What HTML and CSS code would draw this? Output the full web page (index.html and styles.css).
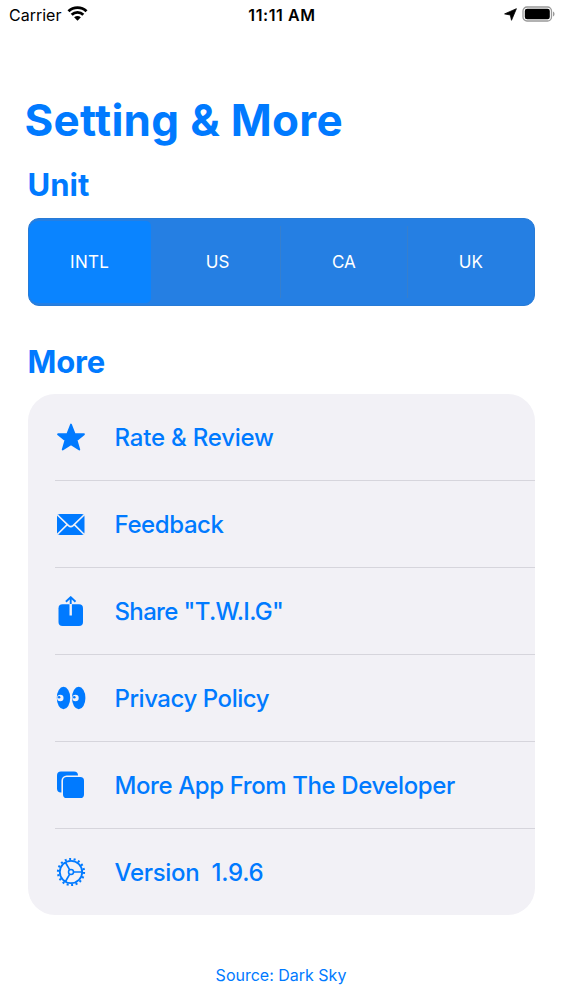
FILE: index.html
```html
<!DOCTYPE html>
<html lang="en">
  <head>
    <meta charset="UTF-8" />
    <meta name="viewport" content="width=device-width, initial-scale=1.0" />
    <title>Setting &amp; More</title>
    <link rel="stylesheet" href="styles.css">
  </head>
  <body>
    <header class="status-bar">
      <div class="status-left">
        <span class="carrier">Carrier</span>
        <svg class="wifi" viewBox="0 0 20 15">
          <path d="M1 5.2a13 13 0 0 1 18 0M4.2 8.7a8.4 8.4 0 0 1 11.6 0" fill="none" stroke="#000" stroke-width="2.9" />
          <path d="M6.6 11.3a5.3 5.3 0 0 1 6.8 0L10 14.8z" />
        </svg>
      </div>
      <span class="time">11:11 AM</span>
      <div class="status-right">
        <svg class="location" viewBox="0 0 13 13"><path d="M12.4.7 7.5 12.3 6.3 7 .6 5.9z" stroke="#000" stroke-width=".8" stroke-linejoin="round" /></svg>
        <svg class="battery" viewBox="0 0 33 16">
          <rect x="1" y="1" width="28.5" height="14" rx="4" fill="none" stroke="#999" stroke-width="1.3" />
          <rect x="2.8" y="2.8" width="25" height="10.4" rx="2.3" />
          <path d="M31 5.5c2 .8 2 4.2 0 5z" fill="#999" />
        </svg>
      </div>
    </header>

    <main>
      <h1>Setting &amp; More</h1>

      <h2 class="unit-title">Unit</h2>
      <div class="segments">
        <button class="segment active">INTL</button>
        <button class="segment">US</button>
        <button class="segment">CA</button>
        <button class="segment">UK</button>
      </div>

      <h2 class="more-title">More</h2>
      <ul class="menu">
        <li>
          <svg class="icon" viewBox="0 0 30 30"><path d="M15 2.5 18.6 11.9 28 12.2 20.6 18.3 23.3 27.6 15 22.2 6.7 27.6 9.4 18.3 2 12.2 11.4 11.9z" stroke="#007aff" stroke-width="1.8" stroke-linejoin="round" /></svg>
          <span class="rate">Rate &amp; Review</span>
        </li>
        <li>
          <svg class="icon" viewBox="0 0 30 30">
            <rect x="1" y="5" width="27.5" height="21" rx="3" />
            <path class="cut" d="M1.5 6 12.5 16.6q2.3 2 4.6 0L28 6M1.5 25.3l9.7-9.7M28 25.3l-9.7-9.7" />
          </svg>
          <span class="feedback">Feedback</span>
        </li>
        <li>
          <svg class="icon" viewBox="0 0 30 30">
            <rect x="2.5" y="8.2" width="24.5" height="21.8" rx="4" />
            <path class="cut slot" d="M14.7 8v11.5" />
            <path d="M14.7 8V1.2M9.9 5.8l4.8-4.7 4.8 4.7" fill="none" stroke="#007aff" stroke-width="1.9" stroke-linejoin="round" />
          </svg>
          <span class="share">Share "T.W.I.G"</span>
        </li>
        <li>
          <svg class="icon" viewBox="0 0 30 30">
            <ellipse cx="7.5" cy="15" rx="6.7" ry="11.2" />
            <ellipse cx="22.7" cy="15" rx="6.7" ry="11.2" />
            <circle class="eye" cx="4.3" cy="15" r="3.2" />
            <circle class="eye" cx="19.5" cy="15" r="3.2" />
            <circle cx="3.1" cy="14.2" r="1.3" />
            <circle cx="18.3" cy="14.2" r="1.3" />
          </svg>
          <span class="privacy">Privacy Policy</span>
        </li>
        <li>
          <svg class="icon" viewBox="0 0 30 30">
            <rect x="1" y="1.5" width="21" height="21" rx="4" />
            <rect class="front" x="6.2" y="6.3" width="22.6" height="22.6" rx="4.5" />
          </svg>
          <span class="apps">More App From The Developer</span>
        </li>
        <li>
          <svg class="icon" viewBox="0 0 30 30">
            <g fill="none" stroke="#007aff">
              <circle cx="15" cy="15" r="13" stroke-width="2.2" stroke-dasharray="2 2.538" />
              <circle cx="15" cy="15" r="11.2" stroke-width="1.8" />
              <circle cx="15" cy="15" r="2.5" stroke-width="1.5" />
              <path d="M17.5 15H26M13.7 12.8 9.5 5.5M13.7 17.2 9.5 24.5" stroke-width="1.7" />
            </g>
          </svg>
          <span class="version">Version&nbsp; 1.9.6</span>
        </li>
      </ul>
    </main>

    <footer>Source: Dark Sky</footer>
  </body>
</html>
```
FILE: styles.css
```css
* {
  box-sizing: border-box;
}

body {
  font-family: Inter, "Liberation Sans", sans-serif;
  background-color: white;
  color: #007aff;
  margin: 0;
  height: 1000px;
  overflow: hidden;
}

.status-bar {
  display: grid;
  grid-template-columns: 1fr auto 1fr;
  align-items: center;
  height: 29px;
  padding: 0 8px 0 9px;
  color: black;
  font-size: 16px;
}

.status-left,
.status-right {
  display: flex;
  align-items: center;
}

.status-left {
  gap: 6px;
}

.status-right {
  justify-content: flex-end;
  gap: 5px;
}

.wifi {
  width: 21px;
  height: 15px;
  margin-top: -2px;
}

.time {
  font-weight: 600;
  letter-spacing: 0.6px;
}

.location {
  width: 13px;
  height: 13px;
}

.battery {
  width: 33px;
  height: 16px;
  margin-top: -2px;
}

main {
  padding: 66px 28px 0 27.5px;
}

h1,
h2 {
  margin: 0;
  font-weight: 700;
  white-space: nowrap;
}

h1 {
  margin-left: -3px;
  font-size: 44px;
  line-height: 50px;
  letter-spacing: 0.3px;
}

h2 {
  font-size: 31px;
  line-height: 40px;
}

.unit-title {
  margin-top: 20px;
}

.segments {
  display: grid;
  grid-template-columns: repeat(4, 1fr);
  height: 88px;
  margin-top: 13px;
  border: 1px solid #277bd7;
  border-radius: 11px;
  background-color: #257fe3;
  overflow: hidden;
}

.segment {
  margin: 7px 0;
  padding: 0;
  border: none;
  border-right: 1px solid #367fce;
  background: none;
  color: white;
  font-family: inherit;
  font-size: 17px;
}

.segment:last-child {
  border-right: none;
}

.segment.active {
  margin: 2px 4px 2px 0;
  border-right: none;
  border-radius: 9px 5px 5px 9px;
  background-color: #0a84ff;
  letter-spacing: 0.3px;
}

.more-title {
  margin-top: 36px;
  letter-spacing: -0.2px;
}

.menu {
  list-style: none;
  margin: 12px 0 0;
  padding: 0;
  border-radius: 27px;
  background-color: #f2f1f6;
}

.menu li {
  display: flex;
  align-items: center;
  gap: 29px;
  height: 87px;
  margin-left: 27px;
  padding-left: 1px;
  border-bottom: 1px solid #d6d5dc;
  font-size: 24px;
  font-weight: 450;
  white-space: nowrap;
}

.menu li:last-child {
  height: 86px;
  border-bottom: none;
}

.rate {
  letter-spacing: -0.2px;
}

.feedback {
  letter-spacing: -0.4px;
}

.share {
  letter-spacing: -0.65px;
}

.privacy {
  letter-spacing: -0.45px;
}

.apps {
  letter-spacing: -0.4px;
}

.version {
  letter-spacing: -0.3px;
}

.icon {
  flex: none;
  width: 30px;
  height: 30px;
  fill: #007aff;
}

.cut {
  fill: none;
  stroke: #f2f1f6;
  stroke-width: 1.6;
}

.slot {
  stroke-width: 2.4;
}

.eye {
  fill: #f2f1f6;
}

.front {
  stroke: #f2f1f6;
  stroke-width: 1.6;
}

footer {
  margin-top: 50px;
  padding-right: 1px;
  font-size: 16px;
  text-align: center;
}
```
